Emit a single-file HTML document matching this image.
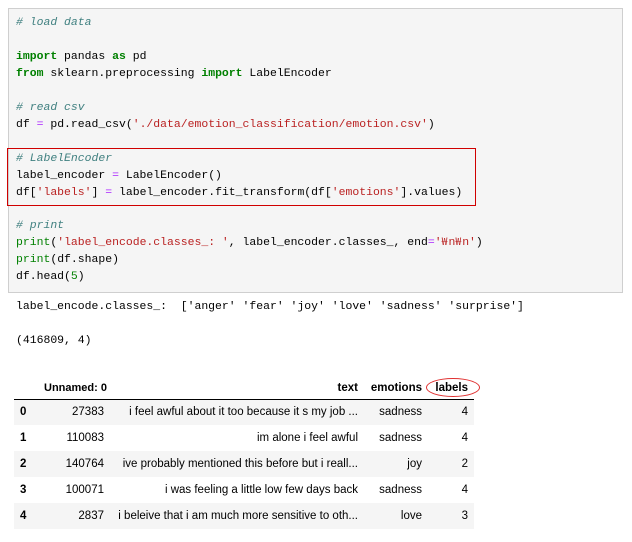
<!DOCTYPE html>
<html><head><meta charset="utf-8"><style>
body{margin:0;width:632px;height:542px;background:#fff;position:relative;overflow:hidden;font-family:"Liberation Sans",sans-serif}
.cell{position:absolute;left:8px;top:8px;width:613px;height:283px;background:#f5f5f5;border:1px solid #cfcfcf}
.code{position:absolute;left:16px;top:15px;font-family:"Liberation Mono","Noto Sans CJK KR",monospace;font-size:11.45px;line-height:16.95px;white-space:pre;color:#000}
.c{color:#408080;font-style:italic}.k{color:#008000;font-weight:bold}.s{color:#ba2121}.o{color:#aa22ff}.n{color:#008000}
.w{display:inline-block;width:6.87px;overflow:visible;font-family:"Noto Sans CJK KR",sans-serif;font-size:10.5px;line-height:10px}
.box{position:absolute;left:7px;top:148px;width:467px;height:56px;border:1px solid #d00000}
.out{position:absolute;left:16px;font-family:"Liberation Mono","Noto Sans CJK KR",monospace;font-size:11.45px;white-space:pre}
table{position:absolute;left:14px;top:377px;border-collapse:collapse;font-size:11.5px;color:#000;table-layout:fixed;width:460px}
th,td{padding:0 6px;height:26px;text-align:right;white-space:nowrap;overflow:hidden;box-sizing:border-box}
thead th{height:22px;border-bottom:1px solid #000;vertical-align:middle;padding-left:0;overflow:visible}
tbody th{text-align:left}
tbody tr:nth-child(odd){background:#f5f5f5}
.ell{position:absolute;left:426px;top:378px;width:52px;height:17px;border:1px solid #e03030;border-radius:50%}
</style></head><body>
<div class="cell"></div>
<div class="code"><span class="c"># load data</span>

<span class="k">import</span> pandas <span class="k">as</span> pd
<span class="k">from</span> sklearn.preprocessing <span class="k">import</span> LabelEncoder

<span class="c"># read csv</span>
df <span class="o">=</span> pd.read_csv(<span class="s">'./data/emotion_classification/emotion.csv'</span>)

<span class="c"># LabelEncoder</span>
label_encoder <span class="o">=</span> LabelEncoder()
df[<span class="s">'labels'</span>] <span class="o">=</span> label_encoder.fit_transform(df[<span class="s">'emotions'</span>].values)

<span class="c"># print</span>
<span class="n">print</span>(<span class="s">'label_encode.classes_: '</span>, label_encoder.classes_, end<span class="o">=</span><span class="s">'<span class="w">₩</span>n<span class="w">₩</span>n'</span>)
<span class="n">print</span>(df.shape)
df.head(<span class="n">5</span>)</div>
<div class="box"></div>
<div class="out" style="top:300px">label_encode.classes_:  ['anger' 'fear' 'joy' 'love' 'sadness' 'surprise']</div>
<div class="out" style="top:334px">(416809, 4)</div>
<table>
<colgroup><col style="width:30px"><col style="width:66px"><col style="width:254px"><col style="width:64px"><col style="width:46px"></colgroup>
<thead><tr><th></th><th style="font-size:11px">Unnamed: 0</th><th>text</th><th>emotions</th><th>labels</th></tr></thead>
<tbody>
<tr><th>0</th><td>27383</td><td>i feel awful about it too because it s my job ...</td><td>sadness</td><td>4</td></tr>
<tr><th>1</th><td>110083</td><td>im alone i feel awful</td><td>sadness</td><td>4</td></tr>
<tr><th>2</th><td>140764</td><td>ive probably mentioned this before but i reall...</td><td>joy</td><td>2</td></tr>
<tr><th>3</th><td>100071</td><td>i was feeling a little low few days back</td><td>sadness</td><td>4</td></tr>
<tr><th>4</th><td>2837</td><td>i beleive that i am much more sensitive to oth...</td><td>love</td><td>3</td></tr>
</tbody></table>
<div class="ell"></div>
</body></html>
